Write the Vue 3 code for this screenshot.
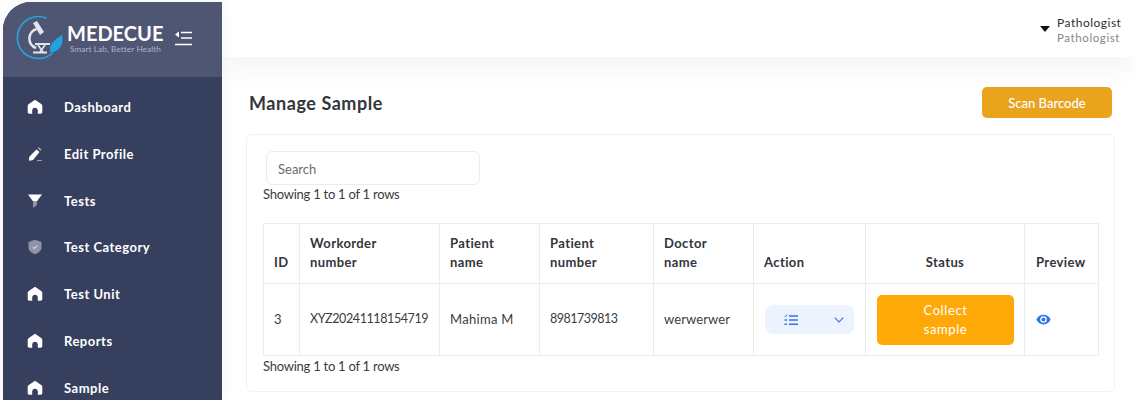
<script setup>
const nav = [
  { label: 'Dashboard', icon: 'home' },
  { label: 'Edit Profile', icon: 'edit' },
  { label: 'Tests', icon: 'funnel' },
  { label: 'Test Category', icon: 'shield' },
  { label: 'Test Unit', icon: 'home' },
  { label: 'Reports', icon: 'home' },
  { label: 'Sample', icon: 'home' }
]
</script>

<template>
  <div class="page">
    <aside class="sidebar">
      <div class="brand">
        <svg class="logo" viewBox="16 15 48 48" width="48" height="48" fill="none">
          <path d="M46 18A21 21 0 1 0 52 53.500" stroke="#22a8df" stroke-width="1.600" stroke-linecap="round" />
          <path d="M33 23 37 21 44 32 40 35z" fill="#dfe6ee" />
          <path d="M36.500 29A10 10 0 0 0 36 48" stroke="#dfe6ee" stroke-width="2.600" />
          <path d="M35 44h15" stroke="#dfe6ee" stroke-width="1.800" />
          <path d="M38 45 43 52M45 45 40 52" stroke="#dfe6ee" stroke-width="1.600" />
          <path d="M33 52.500h14" stroke="#dfe6ee" stroke-width="2" />
          <path d="M62 35C64 44 60 51 51 53 48 47 52 41 62 35z" fill="#21a3de" />
        </svg>
        <div class="brand-text">
          <div class="brand-name">MEDECUE</div>
          <div class="brand-tag">Smart Lab, Better Health</div>
        </div>
        <svg class="collapse" viewBox="0 0 18 15" width="18" height="15">
          <path d="M0 3.500 4 .5v6z" fill="#fff" />
          <path d="M6 1.500h11M6 7h11M0 13.500h17" stroke="#fff" stroke-width="1.400" />
        </svg>
      </div>
      <nav class="nav">
        <div v-for="item in nav" :key="item.label" class="nav-item">
          <svg class="nav-icon" viewBox="0 0 16 16" width="16" height="16">
            <path v-if="item.icon === 'home'" d="M8 .8 1.800 5C1 5.600.7 6.300.7 7.200V13c0 1 .7 1.700 1.700 1.700h2.800v-3.200c0-1.500 1.200-2.700 2.800-2.700s2.800 1.200 2.800 2.700v3.200h2.800c1 0 1.700-.7 1.700-1.700V7.200c0-.9-.3-1.600-1.100-2.200z" fill="#fff" />
            <template v-else-if="item.icon === 'edit'">
              <path d="M9.500 3.500 12.500 6l-6 7.500c-.6.6-3.600 1.500-4.400 1-.5-.6.1-3.600.7-4.300z" fill="#fff" />
              <path d="M10.500 2.300l1.200-1.300 3 2.500-1.200 1.400z" fill="#9a9fb0" />
              <path d="M10 14.500h5" stroke="#9a9fb0" stroke-width="1" />
            </template>
            <template v-else-if="item.icon === 'funnel'">
              <path d="M1 1.500h14L9.800 8.500H6.200z" fill="#fff" />
              <path d="M6 8.500h4v3.500l-3.200 2.500H6z" fill="#8f94a5" />
            </template>
            <template v-else>
              <path d="M8 .8 14.500 3v5.500c0 3.200-3 5.500-6.500 6.700-3.500-1.200-6.500-3.500-6.500-6.700V3z" fill="#8f94a5" />
              <path d="M5.800 8.200 7.300 9.500 10.300 6.700" stroke="#fff" stroke-width=".9" fill="none" />
            </template>
          </svg>
          <span>{{ item.label }}</span>
        </div>
      </nav>
    </aside>

    <main class="main">
      <header class="topbar">
        <span class="caret"></span>
        <div class="user">
          <div class="user-name">Pathologist</div>
          <div class="user-role">Pathologist</div>
        </div>
      </header>

      <div class="content">
        <div class="title-row">
          <h1>Manage Sample</h1>
          <button class="scan">Scan Barcode</button>
        </div>

        <section class="card">
          <input class="search" placeholder="Search" />
          <p class="rows">Showing 1 to 1 of 1 rows</p>
          <table>
            <colgroup>
              <col class="c1" /><col class="c2" /><col class="c3" /><col class="c4" />
              <col class="c5" /><col class="c6" /><col class="c7" /><col class="c8" />
            </colgroup>
            <thead>
              <tr>
                <th>ID</th>
                <th>Workorder<br />number</th>
                <th>Patient<br />name</th>
                <th>Patient<br />number</th>
                <th>Doctor<br />name</th>
                <th>Action</th>
                <th class="center">Status</th>
                <th class="last">Preview</th>
              </tr>
            </thead>
            <tbody>
              <tr>
                <td>3</td>
                <td class="num order">XYZ20241118154719</td>
                <td>Mahima M</td>
                <td class="num phone">8981739813</td>
                <td class="doctor">werwerwer</td>
                <td class="flush">
                  <div class="action">
                    <svg viewBox="0 0 14 12" width="14" height="12" fill="none" stroke="#2f74ec">
                      <path d="M5 2h9M5 6h9M5 10.300h9" stroke-width="1.500" />
                      <path d="M.5 1.800 1.500 2.800 3.300.6" stroke-width="1" />
                      <path d="M.5 6h2.500M.5 10.300h2.500" stroke-width="1.600" />
                    </svg>
                    <svg viewBox="0 0 10 6" width="10" height="6" fill="none" stroke="#2f74ec" stroke-width="1.100">
                      <path d="M.7.7 5 5 9.300.7" />
                    </svg>
                  </div>
                </td>
                <td class="flush"><button class="collect">Collect<br />sample</button></td>
                <td class="flush last">
                  <svg class="eye" viewBox="0 0 16 11" width="15" height="11">
                    <path fill-rule="evenodd" d="M8 .3C4.600.3 1.700 2.300.4 5.500 1.700 8.700 4.600 10.700 8 10.700s6.300-2 7.600-5.200C14.300 2.300 11.400.3 8 .3zM8 9a3.500 3.500 0 1 1 0-7 3.500 3.500 0 0 1 0 7z" fill="#2f74ec" />
                    <circle cx="8" cy="5.500" r="2.100" fill="#2f74ec" />
                  </svg>
                </td>
              </tr>
            </tbody>
          </table>
          <p class="rows bottom">Showing 1 to 1 of 1 rows</p>
        </section>
      </div>
    </main>
  </div>
</template>

<style>
html, body { margin: 0; background: #fff; overflow: hidden; }
</style>

<style scoped>
.page {
  width: 1140px;
  height: 400px;
  overflow: hidden;
  display: flex;
  background: #fff;
  box-sizing: border-box;
  padding-top: 2px;
  padding-left: 3px;
  padding-right: 5px;
  font-family: Lato, "Noto Sans", sans-serif;
  color: #33353a;
}
.sidebar {
  width: 219px;
  flex: none;
  background: #363f5e;
  border-top-left-radius: 28px;
  overflow: hidden;
  position: relative;
  z-index: 2;
  box-shadow: 0 0 16px rgba(0, 0, 0, 0.05);
}
.brand {
  height: 75px;
  box-sizing: border-box;
  background: #4f5673;
  display: flex;
  align-items: center;
  padding: 0 0 0 13px;
}
.logo { flex: none; margin-bottom: 1px; }
.brand-text { margin-left: 3px; width: 98px; color: #fff; margin-bottom: 2px; }
.brand-name { font-size: 20px; line-height: 19px; font-weight: 700; white-space: nowrap; }
.brand-tag { font-size: 8.200px; line-height: 9px; color: #aeb2c3; margin: 2px 0 0 3px; white-space: nowrap; letter-spacing: 0.1px; }
.collapse { margin-left: 10px; margin-top: -3px; }
.nav { padding-top: 6.500px; }
.nav-item {
  height: 46.850px;
  display: flex;
  align-items: center;
  padding-left: 24px;
  color: #fff;
  font-size: 13px;
  font-weight: 700;
  letter-spacing: 0.5px;
}
.nav-icon { margin-right: 21px; flex: none; }
.main { flex: 1; min-width: 0; overflow: hidden; }
.topbar {
  height: 55px;
  background: #fff;
  box-shadow: 0 10px 28px rgba(0, 0, 0, 0.05);
  display: flex;
  justify-content: flex-end;
  align-items: flex-start;
  padding-top: 13px;
  box-sizing: border-box;
  position: relative;
}
.caret {
  width: 0;
  height: 0;
  border: 5px solid transparent;
  border-top: 6px solid #111;
  border-bottom: 0;
  margin: 11px 7px 0 0;
}
.user { width: 78px; font-size: 12px; line-height: 15px; letter-spacing: 0.5px; }
.user-name { color: #2d2f33; white-space: nowrap; }
.user-role { color: #85878c; font-size: 11.500px; letter-spacing: 0.6px; white-space: nowrap; }
.content { padding: 0 20px 0 24px; }
.title-row {
  display: flex;
  justify-content: space-between;
  align-items: center;
  height: 77px;
  box-sizing: border-box;
  padding: 14px 3px 0 3px;
}
h1 { margin: 0; font-size: 18px; font-weight: 700; color: #33353a; letter-spacing: 0.55px; }
.scan {
  width: 130px;
  height: 31px;
  border: 0;
  border-radius: 5px;
  background: #e9a31d;
  color: #fff;
  font: 500 13px Lato, sans-serif;
}
.card {
  border: 1px solid #f1f1f1;
  border-radius: 6px;
  height: 258px;
  box-sizing: border-box;
  padding: 16px 16px 0 16px;
  background: #fff;
}
.search {
  display: block;
  width: 214px;
  height: 34px;
  box-sizing: border-box;
  margin-left: 3px;
  border: 1px solid #ececec;
  border-radius: 6px;
  padding: 2px 11px 0;
  font: 13px Lato, sans-serif;
  outline: 0;
}
.search::placeholder { color: #6b6d72; }
.rows { margin: 0; font-size: 13px; line-height: 18px; color: #3a3c40; letter-spacing: -0.25px; white-space: nowrap; }
table {
  border-collapse: collapse;
  table-layout: fixed;
  width: 835px;
  margin-top: 20px;
  font-size: 13px;
}
.c1 { width: 36px; }
.c2 { width: 140px; }
.c3 { width: 100px; }
.c4 { width: 114px; }
.c5 { width: 100px; }
.c6 { width: 112px; }
.c7 { width: 159px; }
.c8 { width: 74px; }
th, td {
  border: 1px solid #ececec;
  padding: 0 10px;
  text-align: left;
}
th {
  height: 60px;
  vertical-align: bottom;
  line-height: 19px;
  padding-bottom: 11px;
  box-sizing: border-box;
  font-weight: 700;
  color: #33353a;
  letter-spacing: 0.4px;
}
th.center { text-align: center; }
th.last, td.last { padding-left: 11px; }
td { height: 72px; box-sizing: border-box; color: #3a3c40; letter-spacing: 0.3px; padding-bottom: 2px; }
td.flush { padding-bottom: 0; }
.num { font-size: 12.500px; }
.order { letter-spacing: -0.4px; }
.phone { letter-spacing: -0.5px; }
.doctor { letter-spacing: 0.1px; }
.action {
  width: 89px;
  height: 29px;
  margin-left: 1px;
  box-sizing: border-box;
  border-radius: 8px;
  background: #edf3fe;
  display: flex;
  align-items: center;
  justify-content: space-between;
  padding: 0 10px 0 19px;
}
.collect {
  display: block;
  width: 137px;
  height: 50px;
  margin-left: 1px;
  border: 0;
  border-radius: 5px;
  background: #ffa908;
  color: #fff;
  font: 13px/19px Lato, sans-serif;
  letter-spacing: 0.6px;
}
.eye { display: block; }
.bottom { margin-top: 1px; }
</style>
